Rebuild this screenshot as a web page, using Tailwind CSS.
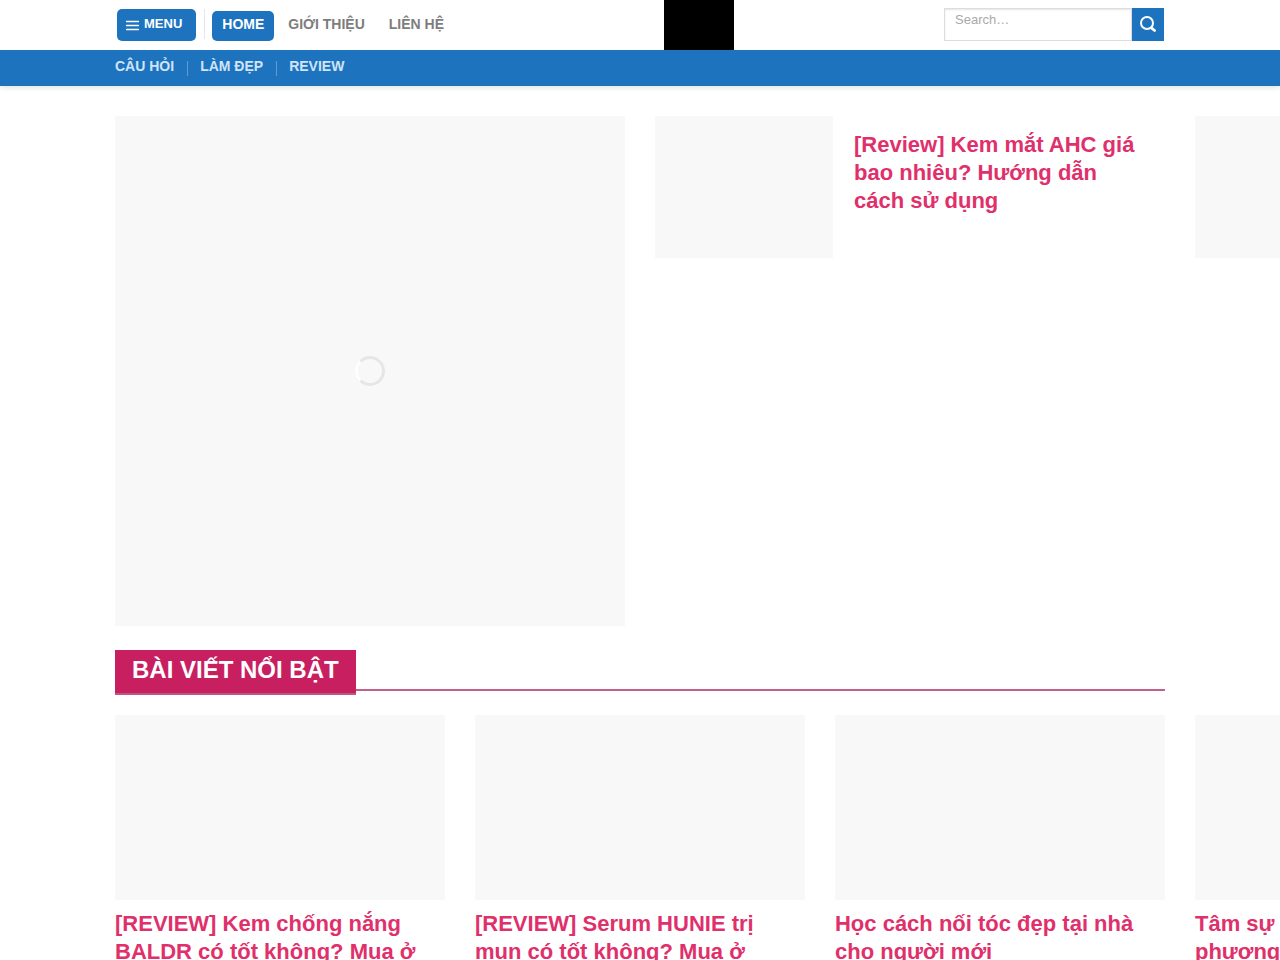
<!DOCTYPE html>
<html lang="vi">
<head>
<meta charset="utf-8">
<meta name="viewport" content="width=device-width, initial-scale=1">
<title>Review làm đẹp</title>
<script src="https://cdn.jsdelivr.net/npm/@tailwindcss/browser@4"></script>
</head>
<body class="overflow-x-hidden bg-white font-['Liberation_Sans',Arial,sans-serif]">
<header class="shadow-[0_1px_6px_rgba(0,0,0,0.15)]">
  <div class="relative mx-auto flex h-[50px] max-w-[1080px] items-start justify-between px-4">
    <nav class="flex items-start pt-[9px] pl-px text-sm font-bold">
      <button type="button" class="flex h-8 items-center gap-1 rounded-[5px] bg-[#1e73be] pr-3.5 pb-0.5 pl-2 text-[13px] text-white">
        <svg class="mt-0.5 size-[15px]" viewBox="0 0 15 15" fill="none" stroke="currentColor" stroke-width="1.3" stroke-linecap="round" aria-hidden="true"><path d="M1.500 3.500h12M1.500 7.500h12M1.500 11.500h12"/></svg>
        MENU
      </button>
      <span class="mx-2 h-[30px] border-l border-gray-200"></span>
      <a href="#" class="mt-0.5 -ml-px flex h-[30px] items-center rounded-[5px] bg-[#1e73be] px-2.5 pb-1 text-white">HOME</a>
      <a href="#" class="mt-0.5 ml-3.5 flex h-[30px] items-center pb-1 text-[#7d7d7d]">GIỚI THIỆU</a>
      <a href="#" class="mt-0.5 ml-6 flex h-[30px] items-center pb-1 text-[#7d7d7d]">LIÊN HỆ</a>
    </nav>
    <div class="absolute top-0 left-[564px] h-full w-[70px] bg-black"></div>
    <form class="mt-2 flex h-[33px]" role="search">
      <input type="search" aria-label="Search" placeholder="Search…" class="w-[188px] border border-[#ddd] px-2.5 pb-2.5 text-[13px] shadow-[inset_0_1px_2px_rgba(0,0,0,0.1)] outline-none placeholder:text-[#a9a9a9]">
      <button type="submit" aria-label="Search" class="flex w-8 items-center justify-center bg-[#1e73be] text-white">
        <svg class="mb-0.5 size-4" viewBox="0 0 16 16" fill="none" stroke="currentColor" stroke-width="2" stroke-linecap="round" aria-hidden="true"><circle cx="7" cy="7" r="6"/><path d="M11.600 12.200l3 2.300" stroke-width="2.800"/></svg>
      </button>
    </form>
  </div>
  <div class="bg-[#1e73be]">
    <nav class="mx-auto flex h-9 max-w-[1080px] items-center gap-[13px] px-[15px] text-sm font-bold text-[#cfe4f8]">
      <a href="#" class="pb-1">CÂU HỎI</a>
      <span class="-mr-px h-[15px] border-l border-white/30"></span>
      <a href="#" class="pb-1">LÀM ĐẸP</a>
      <span class="-mr-px h-[15px] border-l border-white/30"></span>
      <a href="#" class="pb-1">REVIEW</a>
    </nav>
  </div>
</header>
<main class="mx-auto max-w-[1080px] px-[15px] pt-[30px]">
  <section class="grid auto-cols-[calc((100%-30px)/2)] grid-flow-col items-start gap-[30px]">
    <a href="#" aria-label="Bài viết" class="flex aspect-square items-center justify-center bg-[#f8f8f8]">
      <svg class="size-[30px]" viewBox="0 0 30 30" fill="none" stroke-width="3" aria-hidden="true"><circle cx="15" cy="15" r="13.5" stroke="#e6e6e6"/><path d="M5.500 5.400A13.500 13.500 0 0 0 5.500 24.600" stroke="#fff"/></svg>
    </a>
    <article class="flex items-start">
      <div class="aspect-[178/142] w-[178px] shrink-0 bg-[#f8f8f8]"></div>
      <h2 class="px-[21px] pt-[15px] text-[22px] leading-7 font-bold text-[#e0306b]"><a href="#">[Review] Kem mắt AHC giá bao nhiêu? Hướng dẫn cách sử dụng</a></h2>
    </article>
    <article class="flex items-start">
      <div class="aspect-[178/142] w-[178px] shrink-0 bg-[#f8f8f8]"></div>
    </article>
  </section>
  <div class="mt-6 flex items-end">
    <h2 class="border-b-2 border-[#c2557f] bg-[#c71f60] px-[17px] pt-0.5 pb-1.5 text-2xl leading-[35px] font-bold text-white">BÀI VIẾT NỔI BẬT</h2>
    <div class="mb-1 flex-1 border-b-2 border-[#c2608a]"></div>
  </div>
  <section class="mt-5 grid auto-cols-[calc((100%-60px)/3)] grid-flow-col items-start gap-[30px] text-[22px] leading-7 font-bold text-[#e0306b]">
    <article>
      <div class="aspect-[330/185] bg-[#f8f8f8]"></div>
      <h3 class="mt-2.5"><a href="#">[REVIEW] Kem chống nắng BALDR có tốt không? Mua ở</a></h3>
    </article>
    <article>
      <div class="aspect-[330/185] bg-[#f8f8f8]"></div>
      <h3 class="mt-2.5"><a href="#">[REVIEW] Serum HUNIE trị mụn có tốt không? Mua ở</a></h3>
    </article>
    <article>
      <div class="aspect-[330/185] bg-[#f8f8f8]"></div>
      <h3 class="mt-2.5"><a href="#">Học cách nối tóc đẹp tại nhà cho người mới</a></h3>
    </article>
    <article>
      <div class="aspect-[330/185] bg-[#f8f8f8]"></div>
      <h3 class="mt-2.5"><a href="#">Tâm sự<br>phương</a></h3>
    </article>
  </section>
</main>
</body>
</html>
